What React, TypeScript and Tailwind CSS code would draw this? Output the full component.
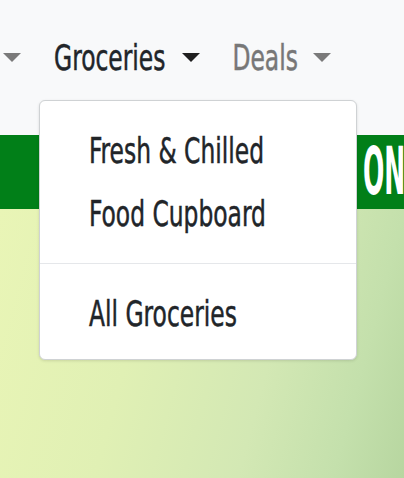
import React from "react";

const font = { fontFamily: '"DejaVu Sans Condensed", "Liberation Sans Narrow", "Roboto", sans-serif' };

function Caret({ dark }: { dark?: boolean }) {
  return (
    <span
      className={`inline-block w-0 h-0 border-l-[9.5px] border-r-[9.5px] border-t-[9px] border-l-transparent border-r-transparent ${
        dark ? "border-t-[#1f1f1f]" : "border-t-[#7a7a7a]"
      }`}
    />
  );
}

function NavText({ children, muted }: { children: React.ReactNode; muted?: boolean }) {
  return (
    <span
      className={`inline-block text-[26px] leading-none scale-y-[1.36] [-webkit-text-stroke:0.35px_currentColor] ${
        muted ? "text-[#777777]" : "text-[#212529]"
      }`}
    >
      {children}
    </span>
  );
}

export default function App() {
  return (
    <div className="relative w-[404px] h-[478px] overflow-hidden flex flex-col bg-[#f8f9fa]" style={font}>
      <nav className="h-[135px] shrink-0 bg-[#f8f9fa]">
        <div className="h-[115px] flex items-center pl-[3px]">
          <Caret />
          <div className="flex items-center gap-[17px] ml-[33px]">
            <NavText>Groceries</NavText>
            <Caret dark />
          </div>
          <div className="flex items-center gap-[15px] ml-[32px]">
            <NavText muted>Deals</NavText>
            <Caret />
          </div>
        </div>
      </nav>

      <div className="h-[74px] shrink-0 bg-[#017f18] flex items-center pl-[363px] overflow-hidden whitespace-nowrap">
        <span className="inline-block origin-left text-[62px] font-bold leading-none text-white scale-x-[0.45] scale-y-[1.05]">
          ON
        </span>
      </div>

      <div className="flex-1 bg-[linear-gradient(105deg,#e9f5b6_0%,#e0f0b4_35%,#d3e8b4_65%,#c4e0ac_85%,#b7d6a0_100%)]" />

      <div className="absolute left-[39px] top-[100px] w-[318px] bg-white border border-[#cfd2d4] rounded-[6px] shadow-[0_1px_3px_rgba(0,0,0,0.12)] pt-[18px] pb-[14px]">
        <div className="h-[63px] flex items-center pl-[49px]">
          <NavText>Fresh &amp; Chilled</NavText>
        </div>
        <div className="h-[63px] flex items-center pl-[49px]">
          <NavText>Food Cupboard</NavText>
        </div>
        <div className="my-[18px] h-px bg-[#e5e7ea]" />
        <div className="h-[63px] flex items-center pl-[49px]">
          <NavText>All Groceries</NavText>
        </div>
      </div>
    </div>
  );
}
